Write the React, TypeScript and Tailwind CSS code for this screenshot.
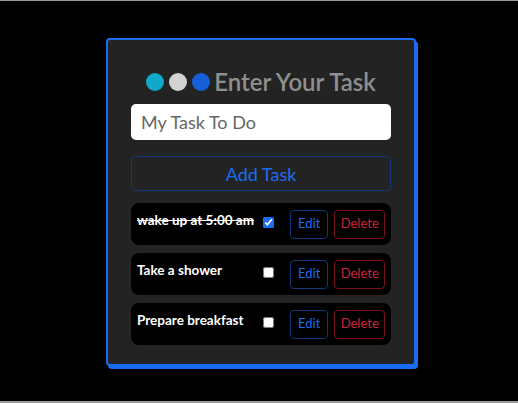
import React from "react";

const tasks = [
  { text: "wake up at 5:00 am", done: true },
  { text: "Take a shower", done: false },
  { text: "Prepare breakfast", done: false },
];

export default function App() {
  return (
    <div
      className="w-[518px] h-[403px] bg-black border-t border-b-2 border-[#9a9a9a] flex justify-center"
      style={{ fontFamily: 'Lato, "Noto Sans", sans-serif' }}
    >
      <div className="mt-[37px] ml-[4px] w-[310px] h-[328px] bg-[#232323] border-2 border-[#1a6cf0] rounded-[4px] shadow-[2px_3px_0_#1a6cf0] px-[23px] pt-[27px] flex flex-col">
        <div className="flex items-center justify-center h-[30px]">
          <span className="w-[18px] h-[18px] rounded-full bg-[#10a9c8]" />
          <span className="w-[18px] h-[18px] rounded-full bg-[#d3d3d3] ml-[5px]" />
          <span className="w-[18px] h-[18px] rounded-full bg-[#1560d8] ml-[5px]" />
          <span className="ml-[4px] text-[24px] font-semibold text-[#8f8f8f] leading-none">
            Enter Your Task
          </span>
        </div>
        <input
          className="mt-[7px] h-[36px] w-full bg-white rounded-[5px] px-[10px] text-[18px] text-black placeholder-[#666] outline-none"
          placeholder="My Task To Do"
        />
        <button className="mt-[16px] h-[35px] w-full border border-[#10387a] rounded-[4px] text-[18px] text-[#1a6cf0] leading-none">
          Add Task
        </button>
        <div className="mt-[12px] flex flex-col gap-[8px]">
          {tasks.map((t) => (
            <div
              key={t.text}
              className="h-[42px] bg-black rounded-[8px] flex items-center pl-[6px] pr-[6px]"
            >
              <span
                className={
                  "w-[121px] text-[13.5px] font-bold text-white mb-[8px] whitespace-nowrap " +
                  (t.done ? "line-through" : "")
                }
              >
                {t.text}
              </span>
              <input
                type="checkbox"
                defaultChecked={t.done}
                className="ml-[6px] w-[11px] h-[11px] accent-[#1a6cf0] mb-[4px]"
              />
              <button className="ml-[16px] h-[29px] w-[39px] border border-[#10387a] rounded-[4px] text-[13px] text-[#1a6cf0]">
                Edit
              </button>
              <button className="ml-[6px] h-[29px] w-[51px] border border-[#7a1020] rounded-[4px] text-[13px] text-[#d0253a]">
                Delete
              </button>
            </div>
          ))}
        </div>
      </div>
    </div>
  );
}
